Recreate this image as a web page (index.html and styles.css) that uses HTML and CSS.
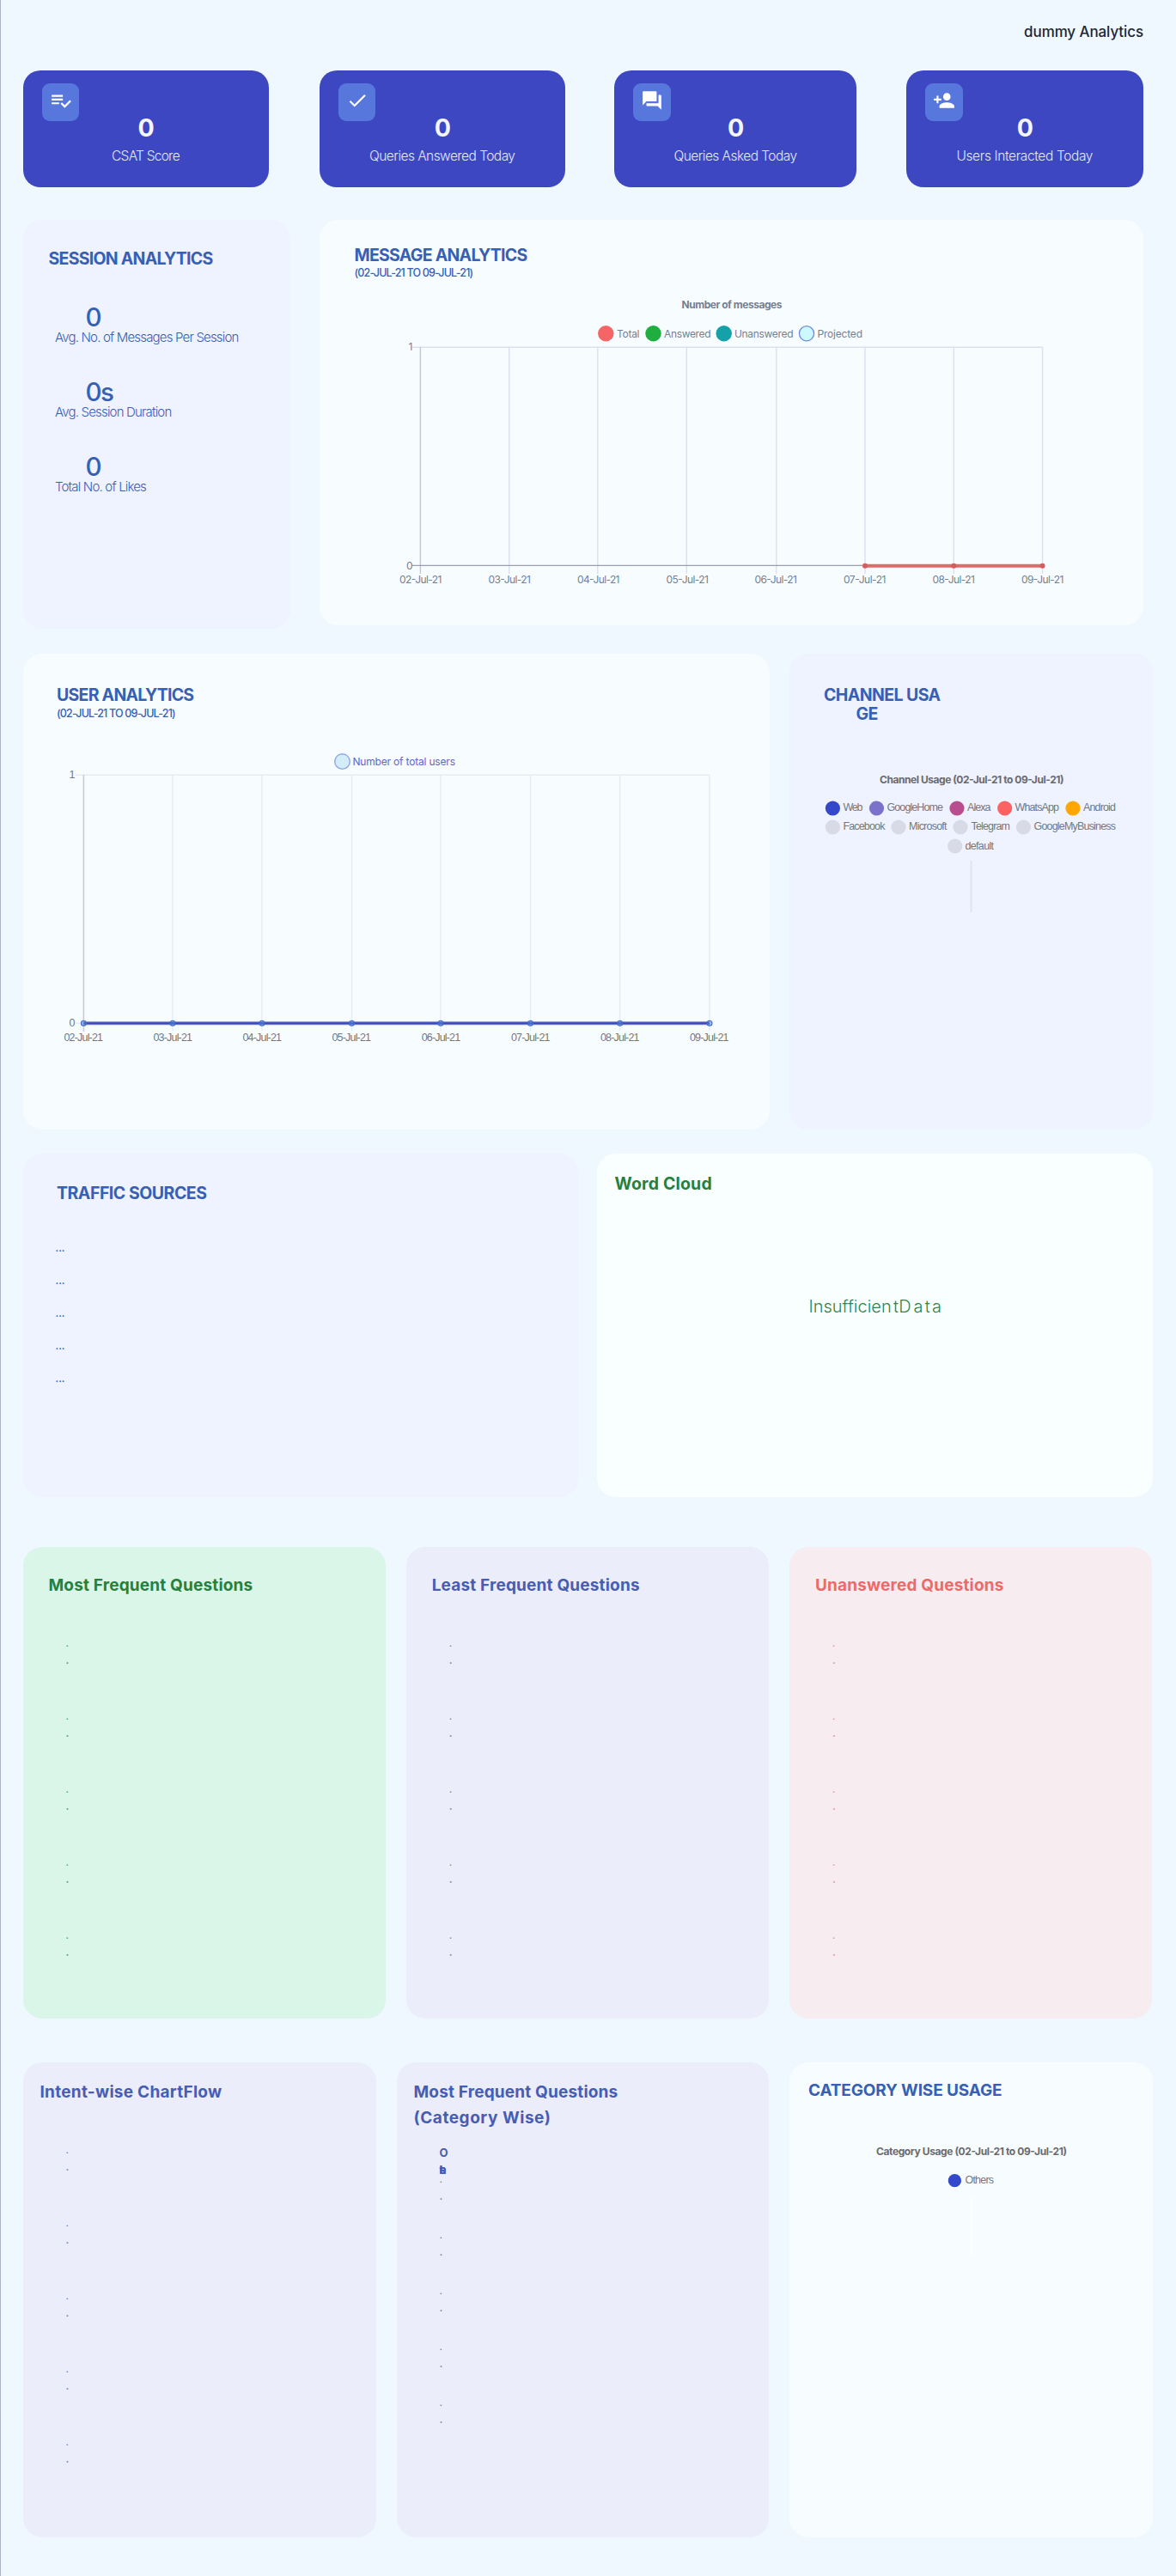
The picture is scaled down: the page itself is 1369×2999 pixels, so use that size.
FILE: index.html
```html
<!DOCTYPE html>
<html lang="en">
<head>
<meta charset="utf-8">
<title>dummy Analytics</title>
<link rel="stylesheet" href="styles.css">
</head>
<body>
<header class="header"><h1 class="header-title">dummy Analytics</h1></header>
<main>
  <section class="kpis">
    <article class="kpi kpi-csat">
      <div class="badge"><svg class="icon" viewBox="0 0 24 24"><path d="M14 10H2v2h12v-2zm0-4H2v2h12V6zM2 16h8v-2H2v2zm19.5-4.5L23 13l-6.99 7-4.51-4.5L13 14l3.01 3 5.49-5.5z"/></svg></div>
      <div class="kpi-value">0</div><div class="kpi-label ls-csat">CSAT Score</div>
    </article>
    <article class="kpi kpi-answered">
      <div class="badge"><svg class="icon" viewBox="0 0 24 24"><path d="M9 16.2L4.8 12l-1.4 1.4L9 19 21 7l-1.4-1.4L9 16.2z"/></svg></div>
      <div class="kpi-value">0</div><div class="kpi-label">Queries Answered Today</div>
    </article>
    <article class="kpi kpi-asked">
      <div class="badge"><svg class="icon" viewBox="0 0 24 24"><path d="M21 6h-2v9H6v2c0 .55.45 1 1 1h11l4 4V7c0-.55-.45-1-1-1zm-4 6V3c0-.55-.45-1-1-1H3c-.55 0-1 .45-1 1v14l4-4h10c.55 0 1-.45 1-1z"/></svg></div>
      <div class="kpi-value">0</div><div class="kpi-label">Queries Asked Today</div>
    </article>
    <article class="kpi kpi-users">
      <div class="badge"><svg class="icon" viewBox="0 0 24 24"><path d="M15 12c2.21 0 4-1.79 4-4s-1.79-4-4-4-4 1.79-4 4 1.79 4 4 4zm-9-2V7H4v3H1v2h3v3h2v-3h3v-2H6zm9 4c-2.67 0-8 1.34-8 4v2h16v-2c0-2.66-5.33-4-8-4z"/></svg></div>
      <div class="kpi-value">0</div><div class="kpi-label ls-users">Users Interacted Today</div>
    </article>
  </section>

  <section class="row row-message">
    <article class="card lavender session">
      <h2 class="title caps">SESSION ANALYTICS</h2>
      <div class="stat"><div class="stat-value">0</div><div class="stat-label">Avg. No. of Messages Per Session</div></div>
      <div class="stat"><div class="stat-value">0s</div><div class="stat-label">Avg. Session Duration</div></div>
      <div class="stat"><div class="stat-value">0</div><div class="stat-label">Total No. of Likes</div></div>
    </article>
    <article class="card light message">
      <h2 class="title caps inset">MESSAGE ANALYTICS</h2>
      <p class="range inset">(02-JUL-21 TO 09-JUL-21)</p>
      <svg class="chart chart-message" viewBox="372 330 959 360">
        <text class="chart-title slate" x="793.5" y="359" textLength="117">Number of messages</text>
        <circle cx="705.3" cy="388.3" r="9.2" fill="#f56565"/><circle cx="760.5" cy="388.3" r="9.2" fill="#1fae3f"/><circle cx="842.7" cy="388.3" r="9.2" fill="#16a0a8"/><circle cx="939" cy="388.3" r="8.6" fill="#ccf8ff" stroke="#7189dc" stroke-width="1.3"/>
        <g class="tick slate">
          <text x="718" y="393" textLength="26.5">Total</text><text x="773" y="393" textLength="54.5">Answered</text><text x="855" y="393" textLength="68.5">Unanswered</text><text x="951.5" y="393" textLength="52.5">Projected</text>
        </g>
        <g class="grid-blue"><path d="M592.7 404V668M695.8 404V668M799.3 404V668M903.8 404V668M1007 404V668M1110.3 404V668M1213.6 404V668M479.5 404.3H1213.6"/></g>
        <path d="M489.4 404V668" stroke="#c1c4da" stroke-width="1.4"/><path d="M479.5 658.4H1213" stroke="#9d9db2" stroke-width="1.2"/>
        <path d="M1007 658.7H1213.6" stroke="#dc6b69" stroke-width="4"/>
        <g fill="#d65c5e"><circle cx="1007" cy="658.7" r="3"/><circle cx="1110.3" cy="658.7" r="3"/><circle cx="1213.6" cy="658.7" r="3"/></g>
        <g class="tick slate"><text x="475.5" y="408">1</text><text x="473" y="662.5" textLength="7">0</text>
          <text x="465" y="679" textLength="49.5">02-Jul-21</text><text x="568.5" y="679" textLength="49.5">03-Jul-21</text><text x="672" y="679" textLength="49.5">04-Jul-21</text><text x="775.5" y="679" textLength="49.5">05-Jul-21</text><text x="878.5" y="679" textLength="49.5">06-Jul-21</text><text x="982" y="679" textLength="49.5">07-Jul-21</text><text x="1085.5" y="679" textLength="49.5">08-Jul-21</text><text x="1189" y="679" textLength="49.5">09-Jul-21</text></g>
      </svg>
    </article>
  </section>

  <section class="row row-user">
    <article class="card light user">
      <h2 class="title caps">USER ANALYTICS</h2>
      <p class="range">(02-JUL-21 TO 09-JUL-21)</p>
      <svg class="chart chart-user" viewBox="27 860 869 400">
        <circle cx="398.5" cy="886.6" r="8.8" fill="#d3edfb" stroke="#8ea4e4" stroke-width="1.4"/>
        <text class="tick violet" x="410.5" y="890.8" textLength="119.5">Number of total users</text>
        <path class="grid-gray" d="M201 902V1200M305 902V1200M409.5 902V1200M513 902V1200M617.5 902V1200M721.7 902V1200M826 902V1200M88 902.3H826M88 1191.2H98"/>
        <path d="M97.4 902V1201" stroke="#c9cdd1" stroke-width="1.6"/>
        <path d="M97.4 1191.2H826" stroke="#7484d6" stroke-width="4"/><path d="M97.4 1191.2H826" stroke="#3d45bd" stroke-width="2"/>
        <g fill="#4f84d4" fill-opacity=".55" stroke="#4568cf" stroke-width="1.1"><circle cx="97.4" cy="1191.2" r="3"/><circle cx="201" cy="1191.2" r="3"/><circle cx="305" cy="1191.2" r="3"/><circle cx="409.5" cy="1191.2" r="3"/><circle cx="513" cy="1191.2" r="3"/><circle cx="617.5" cy="1191.2" r="3"/><circle cx="721.7" cy="1191.2" r="3"/><circle cx="826" cy="1191.2" r="3"/></g>
        <g class="tick arial"><text x="80.5" y="906">1</text><text x="80.5" y="1195">0</text>
          <text x="74.5" y="1211.5" textLength="45.5">02-Jul-21</text><text x="178.5" y="1211.5" textLength="45.5">03-Jul-21</text><text x="282.5" y="1211.5" textLength="45.5">04-Jul-21</text><text x="386.5" y="1211.5" textLength="45.5">05-Jul-21</text><text x="490.7" y="1211.5" textLength="45.5">06-Jul-21</text><text x="595" y="1211.5" textLength="45.5">07-Jul-21</text><text x="699" y="1211.5" textLength="45.5">08-Jul-21</text><text x="803" y="1211.5" textLength="45.5">09-Jul-21</text></g>
      </svg>
    </article>
    <article class="card lavender channel">
      <h2 class="title caps">CHANNEL USA<br><span class="wrapped">GE</span></h2>
      <svg class="chart chart-channel" viewBox="919 880 423 200">
        <text class="chart-title" x="1024" y="911.8" textLength="214.5">Channel Usage (02-Jul-21 to 09-Jul-21)</text>
        <circle cx="969.4" cy="941" r="8.6" fill="#3349c9"/><circle cx="1020.5" cy="941" r="8.6" fill="#7d72cb"/><circle cx="1114" cy="941" r="8.6" fill="#b94e8e"/><circle cx="1169.7" cy="941" r="8.6" fill="#fb6363"/><circle cx="1249" cy="941" r="8.6" fill="#ffa600"/>
        <g fill="#d8dae6"><circle cx="969.4" cy="963" r="8.6"/><circle cx="1046" cy="963" r="8.6"/><circle cx="1118" cy="963" r="8.6"/><circle cx="1191.5" cy="963" r="8.6"/><circle cx="1111.7" cy="985" r="8.6"/></g>
        <g class="tick arial"><text x="981.4" y="944.4" textLength="23">Web</text><text x="1032.5" y="944.4" textLength="65.5">GoogleHome</text><text x="1126" y="944.4" textLength="27.5">Alexa</text><text x="1181.5" y="944.4" textLength="51.5">WhatsApp</text><text x="1261" y="944.4" textLength="38">Android</text>
          <text x="981.4" y="966.4" textLength="49">Facebook</text><text x="1058" y="966.4" textLength="44.5">Microsoft</text><text x="1130.5" y="966.4" textLength="45.5">Telegram</text><text x="1203.5" y="966.4" textLength="95.5">GoogleMyBusiness</text><text x="1123.5" y="988.6" textLength="33.5">default</text></g>
        <path d="M1130.6 1002V1062" stroke="#e2e6f1" stroke-width="2.4"/>
      </svg>
    </article>
  </section>

  <section class="row row-traffic">
    <article class="card lavender traffic">
      <h2 class="title caps">TRAFFIC SOURCES</h2>
      <ul class="sources"><li>...</li><li>...</li><li>...</li><li>...</li><li>...</li></ul>
    </article>
    <article class="card mint cloud">
      <h2 class="title green">Word Cloud</h2>
      <p class="cloud-text"><span class="c1">Insufficien</span><span class="c2">tD</span><span class="c3">ata</span></p>
    </article>
  </section>

  <section class="row row-questions">
    <article class="card green-card question"><h2 class="title green">Most Frequent Questions</h2>
      <ul class="pairs"><li><i>.</i><b>.</b></li><li><i>.</i><b>.</b></li><li><i>.</i><b>.</b></li><li><i>.</i><b>.</b></li><li><i>.</i><b>.</b></li></ul></article>
    <article class="card lilac question"><h2 class="title indigo">Least Frequent Questions</h2>
      <ul class="pairs"><li><i>.</i><b>.</b></li><li><i>.</i><b>.</b></li><li><i>.</i><b>.</b></li><li><i>.</i><b>.</b></li><li><i>.</i><b>.</b></li></ul></article>
    <article class="card rose question"><h2 class="title red">Unanswered Questions</h2>
      <ul class="pairs"><li><i>.</i><b>.</b></li><li><i>.</i><b>.</b></li><li><i>.</i><b>.</b></li><li><i>.</i><b>.</b></li><li><i>.</i><b>.</b></li></ul></article>
  </section>

  <section class="row row-category">
    <article class="card lilac intent"><h2 class="title indigo tall ls-intent">Intent-wise ChartFlow</h2>
      <ul class="pairs"><li><i>.</i><b>.</b></li><li><i>.</i><b>.</b></li><li><i>.</i><b>.</b></li><li><i>.</i><b>.</b></li><li><i>.</i><b>.</b></li></ul></article>
    <article class="card lilac by-category"><h2 class="title indigo tall">Most Frequent Questions<br><span class="ls-cat">(Category Wise)</span></h2>
      <div class="stack-label"><span>O</span><span class="overlap"><i>t</i><i>h</i><i>e</i><i>r</i><i>s</i></span></div>
      <ul class="pairs"><li><i>.</i><b>.</b></li><li><i>.</i><b>.</b></li><li><i>.</i><b>.</b></li><li><i>.</i><b>.</b></li><li><i>.</i><b>.</b></li></ul></article>
    <article class="card light usage"><h2 class="title ls-usage">CATEGORY WISE USAGE</h2>
      <svg class="chart chart-usage" viewBox="919 2490 423 200">
        <text class="chart-title" x="1020" y="2508" textLength="222">Category Usage (02-Jul-21 to 09-Jul-21)</text>
        <circle cx="1111.4" cy="2537.7" r="7.6" fill="#3349c9"/>
        <text class="tick arial" x="1123.5" y="2541" textLength="33.5">Others</text>
        <path d="M1130.8 2557V2626" stroke="#fcfeff" stroke-width="2.4"/>
      </svg></article>
  </section>
</main>
</body>
</html>
```
FILE: styles.css
```css
* { box-sizing: border-box; margin: 0; padding: 0; }
body {
  height: 2999px;
  background: #eff7ff;
  border-left: 1px solid #aab2c4;
  font-family: Inter, "Liberation Sans", sans-serif;
  color: #375fb4;
}
ul { list-style: none; }
i { font-style: normal; }
main { padding-left: 25.5px; }

.header { height: 82px; padding: 27px 38px 0 0; text-align: right; }
.header-title { font-size: 17px; line-height: 20px; font-weight: 500; letter-spacing: -0.1px; color: #1d2630; }

.kpis { display: flex; height: 136px; }
.kpi { background: #3c47c1; border-radius: 20px; padding: 15px 22px 0; color: #fff; text-align: center; white-space: nowrap; }
.kpi-csat { width: 286px; margin-right: 59px; }
.kpi-answered { width: 286.5px; margin-right: 57px; }
.kpi-asked { width: 282px; margin-right: 58px; }
.kpi-users { width: 275.5px; }
.badge { width: 43.5px; height: 44px; margin-bottom: -12px; padding: 7px 9px; border-radius: 9px; background: #5877dd; }
.icon { display: block; width: 26px; height: 26px; fill: #fff; }
.kpi-value { height: 40px; line-height: 40px; font-size: 28.5px; font-weight: 700; letter-spacing: -1px; color: #f3f5ff; }
.kpi-label { margin: 1px -10px 0; line-height: 24px; font-size: 15.5px; font-weight: 300; letter-spacing: -0.55px; color: #e3e8ff; }
.ls-csat { letter-spacing: -0.75px; }
.ls-users { letter-spacing: -0.38px; }

.row { display: flex; align-items: flex-start; }
.card { border-radius: 22px; }
.lavender { background: #eff2ff; }
.light { background: #f7fdff; }
.mint { background: #f8fffe; }
.lilac { background: #ecedfb; }
.green-card { background: #daf6e8; }
.rose { background: #f7edf0; }

.title { font-size: 19px; line-height: 24px; font-weight: 700; letter-spacing: 0.17px; white-space: nowrap; }
.caps { font-size: 19.5px; letter-spacing: -0.74px; }
.green { color: #26803d; }
.indigo { color: #475db3; }
.red { color: #ee6a6a; }
.tall { line-height: 30px; }
.range { font-size: 12.5px; line-height: 17px; font-weight: 500; letter-spacing: -0.83px; white-space: nowrap; }

.row-message { margin-top: 38px; gap: 34.5px; }
.session { width: 311px; height: 476px; padding: 33px 30px 0; }
.stat { height: 87px; padding-left: 7.5px; white-space: nowrap; }
.stat:first-of-type { margin-top: 38px; }
.stat-value { padding-left: 35.5px; height: 36px; line-height: 36px; font-size: 29.5px; font-weight: 500; letter-spacing: -1.5px; }
.stat-label { line-height: 18px; margin-top: -3px; font-size: 15px; font-weight: 300; letter-spacing: -0.82px; }
.message { width: 959px; height: 472px; padding-top: 29px; }
.inset { padding-left: 40.5px; }

.chart { display: block; overflow: visible; }
.chart path { fill: none; }
.chart-message { width: 959px; height: 360px; margin-top: 4px; }
.chart-title { font-size: 12px; font-weight: 700; fill: #6a6a6e; }
.tick { font-size: 12px; fill: #75777d; }
.arial { font-family: "Liberation Sans", Arial, sans-serif; font-size: 12.5px; }
.slate { fill: #747f92; }
.violet { fill: #6464c9; }
.grid-blue { stroke: #dcdff1; stroke-width: 1.4; }
.grid-gray { stroke: #e6ebef; stroke-width: 1.4; }

.row-user { margin-top: 29px; gap: 23.5px; }
.user { width: 869px; height: 553.5px; padding: 36px 0 0 39.5px; }
.user .range { margin-top: 1px; }
.chart-user { width: 869px; height: 400px; margin: 21px 0 0 -39.5px; }
.channel { width: 422.5px; height: 553.5px; padding: 37px 0 0 40px; }
.channel .title { line-height: 22px; letter-spacing: -0.6px; }
.wrapped { padding-left: 37.5px; }
.chart-channel { width: 423px; height: 200px; margin: 38px 0 0 -40px; }

.row-traffic { margin-top: 28px; gap: 22px; }
.traffic { width: 646.5px; height: 400px; padding: 34px 0 0 39.5px; }
.traffic .title { letter-spacing: -0.48px; }
.sources { margin: 33px 0 0 -1.5px; }
.sources li { height: 38.2px; line-height: 38.2px; font-size: 12px; font-weight: 500; }
.cloud { width: 646.5px; height: 400px; padding: 23.5px 20.5px 0; }
.cloud .title { font-size: 19.5px; }
.cloud-text { display: flex; margin: 119px 0 0 226px; font-size: 20px; line-height: 24px; font-weight: 300; color: #2f8546; }
.c1 { width: 98.5px; letter-spacing: 0; }
.c2 { width: 23.5px; letter-spacing: 0.3px; }
.c3 { letter-spacing: 2.2px; }

.row-questions { margin-top: 58px; gap: 23.7px; }
.question { width: 422.5px; height: 549.5px; padding: 33.5px 0 0 30px; }
.question .pairs { margin: 45px 0 0 20px; }
.pairs li { height: 85px; line-height: 20px; font-size: 12px; color: #6d7f9c; }
.pairs i, .pairs b { display: block; height: 20px; }
.pairs i { font-weight: 400; }
.pairs b { font-weight: 600; }
.green-card .pairs li { color: #4b8f68; }
.rose .pairs li { color: #d98a97; }

.row-category { margin-top: 50.5px; gap: 23.5px; }
.row-category .card { height: 553px; }
.intent { width: 411.5px; padding: 20px 0 0 20px; }
.intent .pairs { margin: 42.5px 0 0 30px; }
.by-category { width: 433.5px; padding: 20px 0 0 20px; }
.by-category .pairs { margin: -8.7px 0 0 30px; }
.by-category .pairs li { height: 65.1px; }
.ls-intent { letter-spacing: 0.27px; }
.ls-cat { letter-spacing: 0.55px; }
.stack-label { margin: 15px 0 0 30px; font-size: 13px; line-height: 20px; font-weight: 700; color: #475db3; }
.stack-label > span { display: block; height: 20px; }
.stack-label .overlap { display: grid; }
.overlap i { grid-area: 1 / 1; }
.usage { width: 423px; padding: 21.5px 0 0 22.5px; }
.ls-usage { letter-spacing: -0.15px; }
.chart-usage { width: 423px; height: 200px; margin: 44.5px 0 0 -22.5px; }
```
